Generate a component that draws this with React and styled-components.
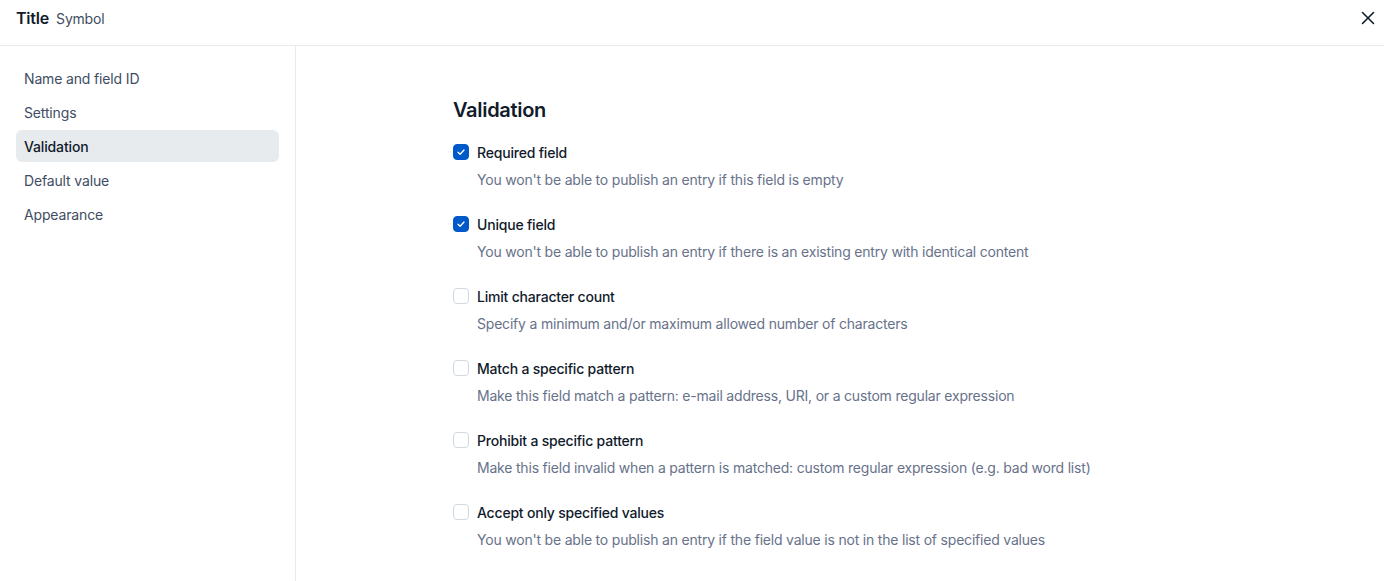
import React from 'react'
import styled, { createGlobalStyle } from 'styled-components'

const Global = createGlobalStyle`
  html, body { margin: 0; padding: 0; background: #fff; }
  body { font-family: Inter, "Noto Sans", sans-serif; color: #111b2b; -webkit-font-smoothing: antialiased; }
  * { box-sizing: border-box; }
`

const Page = styled.div`
  display: flex;
  flex-direction: column;
  height: 581px;
`

const Header = styled.div`
  height: 46px;
  flex: none;
  display: flex;
  align-items: center;
  justify-content: space-between;
  padding: 0 4px 0 16px;
  border-bottom: 1px solid #e7ebee;
`

const TitleWrap = styled.div`
  display: flex;
  align-items: baseline;
  gap: 7px;
  margin-top: -10px;
`

const Title = styled.span`
  font-size: 16px;
  font-weight: 600;
  letter-spacing: -0.2px;
  color: #111b2b;
`

const Sub = styled.span`
  font-size: 14px;
  letter-spacing: -0.2px;
  color: #414d63;
`

const Close = styled.button`
  border: none;
  background: none;
  padding: 4px;
  display: flex;
  cursor: pointer;
  margin-top: -10px;
`

const Body = styled.div`
  flex: 1;
  display: flex;
`

const Sidebar = styled.nav`
  width: 296px;
  flex: none;
  border-right: 1px solid #e7ebee;
  padding: 16px 16px;
  display: flex;
  flex-direction: column;
  gap: 2px;
`

const NavItem = styled.div`
  height: 32px;
  display: flex;
  align-items: center;
  padding: 0 8px;
  border-radius: 6px;
  font-size: 14px;
  letter-spacing: -0.15px;
  color: ${p => (p.$active ? '#111b2b' : '#414d63')};
  font-weight: ${p => (p.$active ? 500 : 400)};
  background: ${p => (p.$active ? '#e7ebee' : 'transparent')};
`

const Main = styled.main`
  flex: 1;
  padding: 50px 0 0 157px;
`

const Heading = styled.h2`
  margin: 0 0 18px;
  font-size: 20px;
  line-height: 28px;
  font-weight: 600;
  letter-spacing: -0.3px;
  color: #111b2b;
`

const List = styled.div`
  display: flex;
  flex-direction: column;
  gap: 24px;
`

const Option = styled.div`
  display: flex;
  flex-direction: column;
  gap: 8px;
`

const Row = styled.label`
  display: flex;
  align-items: center;
  gap: 8px;
  height: 20px;
  font-size: 14px;
  font-weight: 500;
  letter-spacing: -0.2px;
  color: #111b2b;
`

const Box = styled.span`
  width: 16px;
  height: 16px;
  border-radius: 4px;
  display: flex;
  align-items: center;
  justify-content: center;
  background: ${p => (p.$checked ? '#0059c8' : '#fff')};
  border: 1px solid ${p => (p.$checked ? '#0059c8' : '#cfd9e0')};
`

const Desc = styled.div`
  padding-left: 24px;
  font-size: 14px;
  line-height: 20px;
  letter-spacing: -0.2px;
  color: #67728a;
`

const nav = ['Name and field ID', 'Settings', 'Validation', 'Default value', 'Appearance']

const options = [
  { label: 'Required field', desc: "You won't be able to publish an entry if this field is empty", checked: true },
  { label: 'Unique field', desc: "You won't be able to publish an entry if there is an existing entry with identical content", checked: true },
  { label: 'Limit character count', desc: 'Specify a minimum and/or maximum allowed number of characters' },
  { label: 'Match a specific pattern', desc: 'Make this field match a pattern: e-mail address, URI, or a custom regular expression' },
  { label: 'Prohibit a specific pattern', desc: 'Make this field invalid when a pattern is matched: custom regular expression (e.g. bad word list)' },
  { label: 'Accept only specified values', desc: "You won't be able to publish an entry if the field value is not in the list of specified values" },
]

export default function App() {
  return (
    <Page>
      <Global />
      <Header>
        <TitleWrap>
          <Title>Title</Title>
          <Sub>Symbol</Sub>
        </TitleWrap>
        <Close aria-label="Close">
          <svg width="16" height="16" viewBox="0 0 16 16" fill="none">
            <path d="M2.5 2.5L13.5 13.5M13.5 2.5L2.5 13.5" stroke="#111b2b" strokeWidth="1.6" strokeLinecap="round" />
          </svg>
        </Close>
      </Header>
      <Body>
        <Sidebar>
          {nav.map(n => (
            <NavItem key={n} $active={n === 'Validation'}>{n}</NavItem>
          ))}
        </Sidebar>
        <Main>
          <Heading>Validation</Heading>
          <List>
            {options.map(o => (
              <Option key={o.label}>
                <Row>
                  <Box $checked={o.checked}>
                    {o.checked && (
                      <svg width="10" height="10" viewBox="0 0 10 10" fill="none">
                        <path d="M2 5.2L4.1 7.2L8 3" stroke="#fff" strokeWidth="1.3" strokeLinecap="round" strokeLinejoin="round" />
                      </svg>
                    )}
                  </Box>
                  {o.label}
                </Row>
                <Desc>{o.desc}</Desc>
              </Option>
            ))}
          </List>
        </Main>
      </Body>
    </Page>
  )
}
